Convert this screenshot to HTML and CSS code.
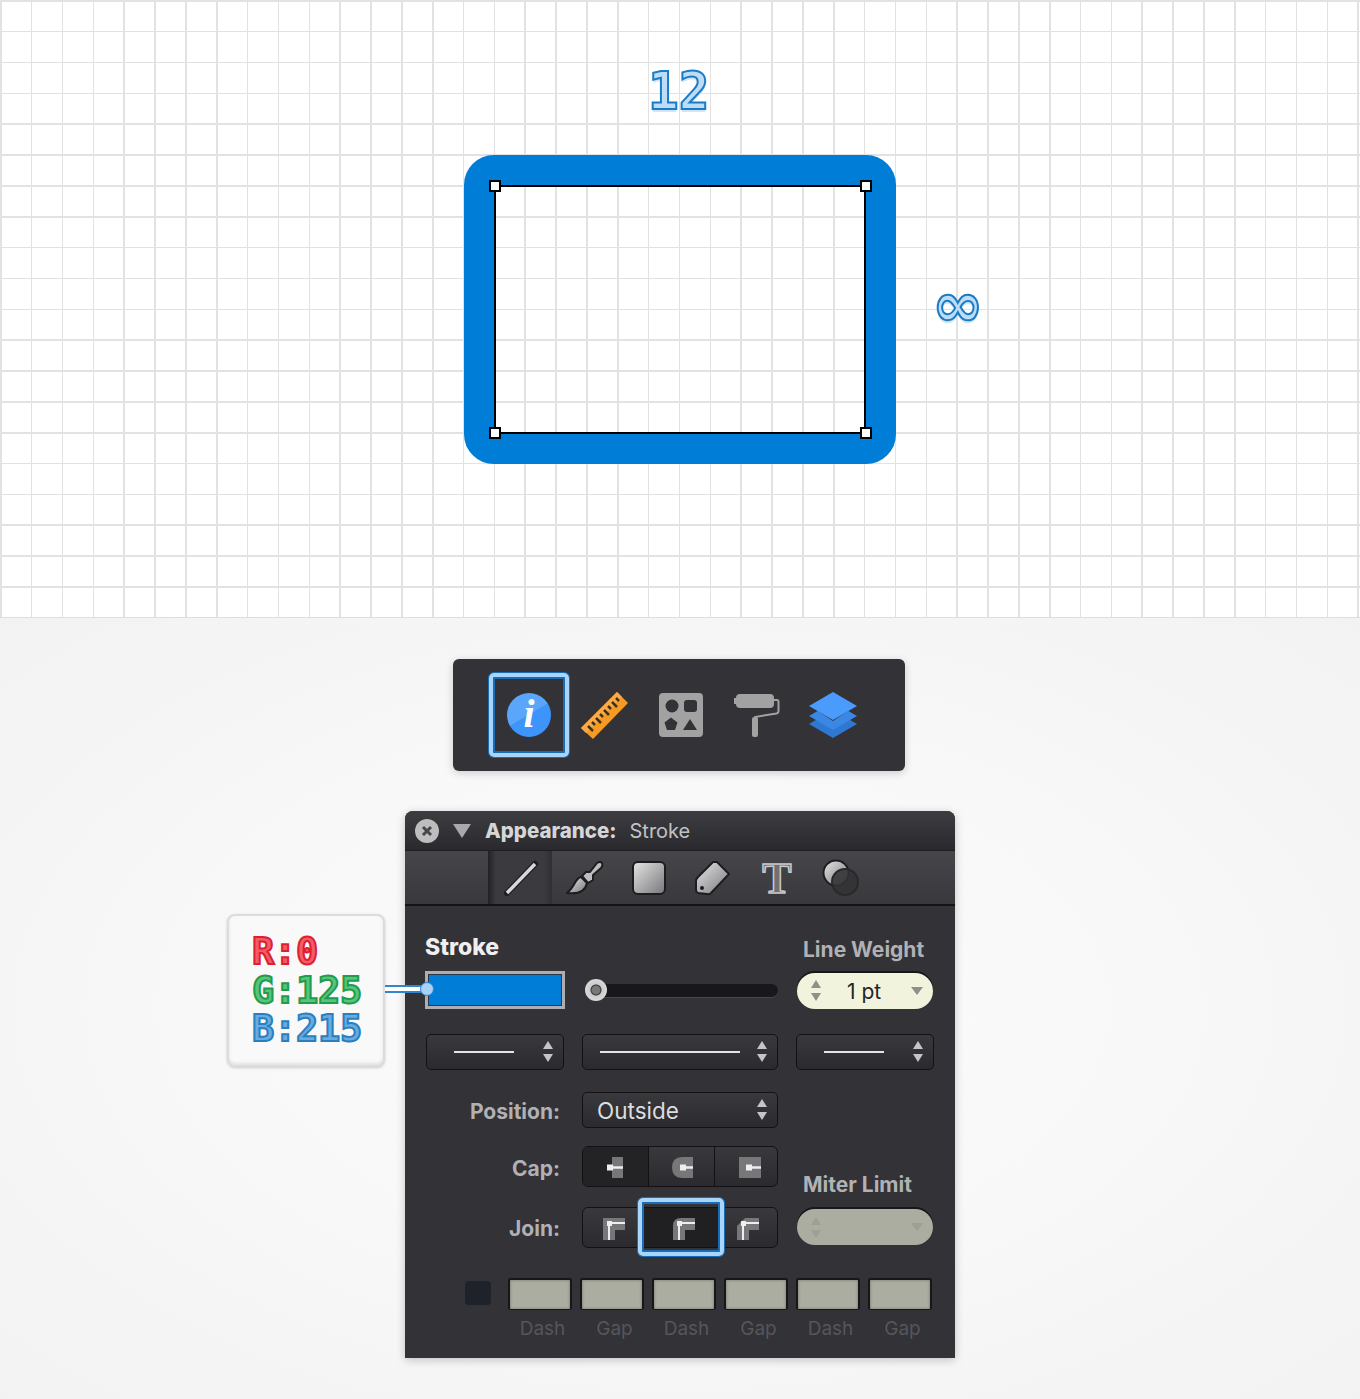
FILE: index.html
```html
<!DOCTYPE html>
<html lang="en">
  <head>
    <meta charset="UTF-8" />
    <meta name="viewport" content="width=device-width, initial-scale=1.0" />
    <title>Appearance: Stroke</title>
    <link rel="stylesheet" href="styles.css">
  </head>
  <body>
    <!-- artboard -->
    <section class="canvas">
      <div class="dim dim-width">12</div>
      <div class="dim dim-height">∞</div>
      <div class="shape">
        <div class="selection">
          <span class="handle handle-tl"></span>
          <span class="handle handle-tr"></span>
          <span class="handle handle-bl"></span>
          <span class="handle handle-br"></span>
        </div>
      </div>
    </section>

    <section class="tray">
      <!-- inspector toolbar -->
      <div class="toolbar">
        <div class="tool tool-on">
          <svg width="48" height="48" viewBox="0 0 48 48">
            <defs>
              <linearGradient id="infoFill" x1="0.2" y1="0" x2="0.8" y2="1">
                <stop offset="0" stop-color="#5aa6fa" />
                <stop offset="0.48" stop-color="#5aa6fa" />
                <stop offset="0.5" stop-color="#3d95fb" />
                <stop offset="1" stop-color="#3d95fb" />
              </linearGradient>
            </defs>
            <circle cx="24" cy="24" r="22" fill="url(#infoFill)" />
            <text x="24" y="36" text-anchor="middle" class="info-i">i</text>
          </svg>
        </div>
        <div class="tool">
          <svg width="48" height="48" viewBox="0 0 48 48">
            <path d="M0 37 36 1 47 12 12 48Z" fill="#f59a23" />
            <path d="M0 37 36 1 41 6 5 42Z" fill="#fbaa45" />
            <path d="M7 35l5 5M11 31l3 3M15 27l5 5M19 23l3 3M23 19l5 5M27 15l3 3M31 11l5 5M35 7l3 3" stroke="#3b3226" stroke-width="2.500" fill="none" />
          </svg>
        </div>
        <div class="tool">
          <svg width="44" height="44" viewBox="0 0 44 44">
            <rect width="44" height="44" rx="4" fill="#a2a2a2" />
            <circle cx="13" cy="13" r="6.500" fill="#323237" />
            <rect x="25" y="7" width="13" height="12" rx="3" fill="#323237" />
            <path d="M12 24.500 18.500 29.500 16 37H8L5.500 29.500Z" fill="#323237" />
            <path d="M31 26 38 37H24Z" fill="#323237" />
          </svg>
        </div>
        <div class="tool">
          <svg width="48" height="44" viewBox="0 0 48 44">
            <rect x="3" y="1" width="38" height="14" rx="4" fill="#a2a2a2" />
            <rect x="1" y="5" width="3" height="6" fill="#a2a2a2" />
            <path d="M41 7h3q1.500 0 1.500 2v9q0 2-2 2.500L22 24v3" fill="none" stroke="#a2a2a2" stroke-width="2" />
            <rect x="19" y="24" width="6" height="20" rx="2" fill="#a2a2a2" />
          </svg>
        </div>
        <div class="tool">
          <svg width="48" height="46" viewBox="0 0 48 46">
            <path d="M24 18 48 32 24 46 0 32Z" fill="#2f78d2" />
            <path d="M24 9 48 23 24 37 0 23Z" fill="#323237" />
            <path d="M24 10 48 24 24 38 0 24Z" fill="#3b88e4" />
            <path d="M24 -1 48 13 24 29 0 13Z" fill="#323237" />
            <path d="M24 0 48 14 24 28 0 14Z" fill="#4a9bfb" />
          </svg>
        </div>
      </div>

      <!-- appearance panel -->
      <div class="panel">
        <header class="titlebar">
          <span class="close">
            <svg width="12" height="12" viewBox="0 0 12 12"><path d="M2 2l8 8M10 2l-8 8" stroke="#47474b" stroke-width="3" /></svg>
          </span>
          <span class="disclosure"></span>
          <strong class="title">Appearance:</strong>
          <span class="subtitle">Stroke</span>
        </header>

        <nav class="tabs">
          <div class="tab tab-on">
            <svg width="36" height="36" viewBox="0 0 36 36">
              <defs>
                <linearGradient id="tabFill" x1="0" y1="0" x2="1" y2="1">
                  <stop offset="0" stop-color="#e6e6e6" />
                  <stop offset="1" stop-color="#77777b" />
                </linearGradient>
              </defs>
              <path d="M4 33 32 4" stroke="#1d1d20" stroke-width="6" stroke-linecap="round" />
              <path d="M4 33 32 4" stroke="#d8d8d8" stroke-width="3.500" />
            </svg>
          </div>
          <div class="tab">
            <svg width="38" height="36" viewBox="0 0 38 36">
              <path d="M1 33C9 34 19 33 21 23L15 17C9 18 9 27 1 33Z" fill="url(#tabFill)" stroke="#1d1d20" stroke-width="2" stroke-linejoin="round" />
              <path d="M16 16 20 12 24 12 31 3Q34 1 36 3 37 6 35 8L27 15V20L22 23Z" fill="#bdbdbd" stroke="#1d1d20" stroke-width="2" stroke-linejoin="round" />
            </svg>
          </div>
          <div class="tab">
            <svg width="36" height="36" viewBox="0 0 36 36">
              <rect x="2" y="2" width="32" height="32" rx="5" fill="url(#tabFill)" stroke="#1d1d20" stroke-width="2" />
            </svg>
          </div>
          <div class="tab">
            <svg width="36" height="36" viewBox="0 0 36 36">
              <path d="M22 2 34 14 16 33Q14 35 12 34L3 33Q1 32 1 30V21Q1 19 3 17L18 2Z" fill="url(#tabFill)" stroke="#1d1d20" stroke-width="2" stroke-linejoin="round" />
              <circle cx="7" cy="28" r="2" fill="#1d1d20" />
            </svg>
          </div>
          <div class="tab">
            <svg class="tab-t-icon" width="36" height="40" viewBox="0 0 36 40">
              <text x="18" y="35" text-anchor="middle" class="tab-t">T</text>
            </svg>
          </div>
          <div class="tab">
            <svg width="38" height="38" viewBox="0 0 38 38">
              <circle cx="14" cy="14" r="12.500" fill="url(#tabFill)" stroke="#1d1d20" stroke-width="2" />
              <circle cx="23" cy="23" r="13" fill="#333336" fill-opacity="0.88" stroke="#29292c" stroke-width="2" />
            </svg>
          </div>
        </nav>

        <div class="panel-body">
          <div class="row row-labels">
            <h2 class="stroke-label">Stroke</h2>
            <span></span>
            <span class="group-label">Line Weight</span>
          </div>

          <div class="row row-stroke">
            <div class="swatch"></div>
            <div class="slider"><span class="knob"></span></div>
            <div class="stepper">
              <span class="arrows arrows-soft"><i class="up"></i><i class="down"></i></span>
              <span class="stepper-value">1 pt</span>
              <i class="down drop"></i>
            </div>
          </div>

          <div class="row row-selects">
            <div class="select select-line"><span class="stroke-line line-short"></span><span class="arrows"><i class="up"></i><i class="down"></i></span></div>
            <div class="select select-line"><span class="stroke-line line-long"></span><span class="arrows"><i class="up"></i><i class="down"></i></span></div>
            <div class="select select-line select-last"><span class="stroke-line line-short"></span><span class="arrows"><i class="up"></i><i class="down"></i></span></div>
          </div>

          <div class="row row-position">
            <span class="field-label">Position:</span>
            <div class="select select-text">Outside<span class="arrows"><i class="up"></i><i class="down"></i></span></div>
          </div>

          <div class="row row-cap">
            <span class="field-label">Cap:</span>
            <div class="segments segments-cap">
              <div class="segment segment-dark">
                <svg width="24" height="24" viewBox="0 0 24 24">
                  <rect x="6" y="1" width="11" height="21" fill="#77777a" />
                  <path d="M1 11.500H17" stroke="#eee" stroke-width="2.500" />
                  <rect x="1" y="8.500" width="6" height="6" fill="#eee" />
                </svg>
              </div>
              <div class="segment">
                <svg width="24" height="24" viewBox="0 0 24 24">
                  <path d="M23 1H12Q2 1 2 11.500 2 22 12 22H23Z" fill="#77777a" />
                  <path d="M11 11.500H23" stroke="#eee" stroke-width="2.500" />
                  <rect x="10" y="8.500" width="6" height="6" fill="#eee" />
                </svg>
              </div>
              <div class="segment">
                <svg width="24" height="24" viewBox="0 0 24 24">
                  <rect x="1" y="1" width="22" height="21" fill="#77777a" />
                  <path d="M9 11.500H23" stroke="#eee" stroke-width="2.500" />
                  <rect x="8" y="8.500" width="6" height="6" fill="#eee" />
                </svg>
              </div>
            </div>
            <span class="group-label miter-label">Miter Limit</span>
          </div>

          <div class="row row-join">
            <span class="field-label">Join:</span>
            <div class="segments segments-join">
              <div class="segment">
                <svg width="24" height="24" viewBox="0 0 24 24">
                  <path d="M1 1H23V13H13V23H1Z" fill="#77777a" />
                  <path d="M7 23V6H23" stroke="#eee" stroke-width="2" fill="none" />
                  <rect x="5" y="4" width="5" height="5" fill="#eee" />
                </svg>
              </div>
              <div class="segment segment-on">
                <svg width="24" height="24" viewBox="0 0 24 24">
                  <path d="M9 1H23V13H13V23H1V9Q1 1 9 1Z" fill="#77777a" />
                  <path d="M7 23V6H23" stroke="#eee" stroke-width="2" fill="none" />
                  <rect x="5" y="4" width="5" height="5" fill="#eee" />
                </svg>
              </div>
              <div class="segment">
                <svg width="24" height="24" viewBox="0 0 24 24">
                  <path d="M9 1H23V13H13V23H1V9Z" fill="#77777a" />
                  <path d="M7 23V6H23" stroke="#eee" stroke-width="2" fill="none" />
                  <rect x="5" y="4" width="5" height="5" fill="#eee" />
                </svg>
              </div>
            </div>
            <div class="stepper stepper-off">
              <span class="arrows arrows-soft"><i class="up"></i><i class="down"></i></span>
              <i class="down drop"></i>
            </div>
          </div>

          <div class="dash-row">
            <span class="dash-check"></span>
            <div class="dash-field"><span class="dash-box"></span><span class="dash-name">Dash</span></div>
            <div class="dash-field"><span class="dash-box"></span><span class="dash-name">Gap</span></div>
            <div class="dash-field"><span class="dash-box"></span><span class="dash-name">Dash</span></div>
            <div class="dash-field"><span class="dash-box"></span><span class="dash-name">Gap</span></div>
            <div class="dash-field"><span class="dash-box"></span><span class="dash-name">Dash</span></div>
            <div class="dash-field"><span class="dash-box"></span><span class="dash-name">Gap</span></div>
          </div>
        </div>
      </div>

      <!-- colour callout -->
      <aside class="callout">
        <div class="rgb rgb-r">R:0</div>
        <div class="rgb rgb-g">G:125</div>
        <div class="rgb rgb-b">B:215</div>
        <span class="callout-wire"></span>
        <span class="callout-dot"></span>
      </aside>
    </section>
  </body>
</html>
```

FILE: styles.css
```css
:root {
  --blue: rgb(0, 125, 215);
  --panel: #323237;
  --ring-dark: #1a6db5;
  --ring-light: #a8d5fc;
  --grid-line: #e2e2e4;
  --field-off: #abada0;
}

* {
  box-sizing: border-box;
}

html {
  font-family: "Inter", "Liberation Sans", sans-serif;
}

body {
  margin: 0;
  width: 1360px;
  height: 1399px;
  overflow: hidden;
  background: #f6f6f6;
}

/* artboard */

.canvas {
  position: relative;
  height: 618px;
  background-color: #fff;
  background-image:
    repeating-linear-gradient(90deg, var(--grid-line) 0, var(--grid-line) 1.6px, transparent 1.6px, transparent 30.85px),
    repeating-linear-gradient(180deg, var(--grid-line) 0, var(--grid-line) 1.6px, transparent 1.6px, transparent 30.85px);
  border-bottom: 1px solid #dedede;
}

.dim {
  position: absolute;
  font-family: "DejaVu Sans Mono", monospace;
  font-weight: 700;
  color: #bcdcf8;
  -webkit-text-stroke: 2px #1a7bc6;
  text-shadow: 0 3px 0 #d3e6f7;
}

.dim-width {
  left: 648px;
  top: 63px;
  font-size: 51px;
  line-height: 58px;
}

.dim-height {
  left: 932px;
  top: 274px;
  font-family: "DejaVu Sans", sans-serif;
  font-size: 62px;
  line-height: 62px;
}

.shape {
  position: absolute;
  left: 464px;
  top: 155px;
  width: 432px;
  height: 309px;
  border: 30px solid var(--blue);
  border-radius: 30px;
}

.selection {
  position: absolute;
  inset: 0;
  border: 2px solid #000;
}

.handle {
  position: absolute;
  width: 12px;
  height: 12px;
  background: #fff;
  border: 2px solid #000;
}

.handle-tl { left: -7px; top: -7px; }
.handle-tr { right: -8px; top: -7px; }
.handle-bl { left: -7px; bottom: -7px; }
.handle-br { right: -8px; bottom: -7px; }

/* tray */

.tray {
  position: relative;
  height: 781px;
  padding-top: 41px;
  display: flex;
  flex-direction: column;
  align-items: center;
  background: radial-gradient(ellipse at 50% 50%, #fbfbfb 0%, #f8f8f8 50%, #f2f2f2 100%);
}

.toolbar {
  width: 452px;
  height: 112px;
  margin-right: 2px;
  padding-left: 38px;
  display: flex;
  align-items: center;
  background: var(--panel);
  border-radius: 6px;
  box-shadow: 0 2px 8px rgba(0, 0, 0, 0.18);
}

.tool {
  position: relative;
  width: 76px;
  height: 112px;
  display: flex;
  align-items: center;
  justify-content: center;
}

.tool-on::after,
.segment-on::after {
  content: "";
  position: absolute;
  border: 4px solid var(--ring-light);
  border-radius: 5px;
  box-shadow: 0 0 0 1px var(--ring-dark), inset 0 0 0 2px var(--ring-dark);
}

.tool-on::after {
  left: -2px;
  right: -2px;
  top: 14px;
  bottom: 14px;
}

/* panel */

.panel {
  width: 550px;
  height: 547px;
  margin-top: 40px;
  background: var(--panel);
  border-radius: 8px 8px 0 0;
  box-shadow: 0 2px 10px rgba(0, 0, 0, 0.22);
}

.titlebar {
  height: 40px;
  padding-left: 10px;
  display: flex;
  align-items: center;
  background: linear-gradient(#3c3c41, #2a2a2e);
  border-radius: 8px 8px 0 0;
  border-bottom: 1px solid #1e1e20;
}

.close {
  width: 24px;
  height: 24px;
  border-radius: 50%;
  background: #bdbdbd;
  display: flex;
  align-items: center;
  justify-content: center;
}

.disclosure {
  margin-left: 14px;
  border-left: 9px solid transparent;
  border-right: 9px solid transparent;
  border-top: 14px solid #a9a9ab;
}

.title {
  margin-left: 14px;
  font-size: 20.500px;
  font-weight: 800;
  line-height: 38px;
  color: #d6d6d6;
}

.subtitle {
  margin-left: 13px;
  font-size: 20px;
  line-height: 38px;
  color: #c2c2c4;
}

.tabs {
  height: 55px;
  padding-left: 84px;
  display: flex;
  background: linear-gradient(#45454a, #38383d);
  border-bottom: 2px solid #141416;
}

.tab {
  width: 64px;
  display: flex;
  align-items: center;
  justify-content: center;
}

.tab-on {
  margin-left: -1px;
  margin-right: 1px;
  padding-left: 1px;
  background: linear-gradient(90deg, #222225, #3a3a3f 12%, #3a3a3f 88%, #303034);
}

.tab-t-icon {
  overflow: visible;
}

.tab-t {
  font-family: "Liberation Serif", serif;
  font-size: 44px;
  font-weight: 700;
  fill: #707074;
  stroke: #c8c8ca;
  stroke-width: 1.500px;
}

.info-i {
  font-family: "Liberation Serif", serif;
  font-size: 40px;
  font-weight: 700;
  font-style: italic;
  fill: #fff;
}

.panel-body {
  padding: 28px 0 0 20px;
}

.row {
  display: grid;
  grid-template-columns: 140px 196px 139px;
  column-gap: 17px;
}

.row-labels { height: 37px; }
.row-stroke { height: 38px; align-items: center; }
.row-selects { height: 36px; margin-top: 25px; }
.row-position { height: 36px; margin-top: 22px; }
.row-cap { height: 41px; margin-top: 18px; }
.row-join { height: 41px; margin-top: 20px; }

.stroke-label {
  margin: 0;
  font-size: 23px;
  font-weight: 800;
  line-height: 27px;
  color: #efefef;
}

.group-label {
  padding: 3px 0 0 8px;
  font-size: 21px;
  font-weight: 700;
  line-height: 26px;
  color: #b1b1b4;
  white-space: nowrap;
}

.miter-label {
  align-self: end;
  margin-bottom: -9px;
}

.field-label {
  padding-right: 5px;
  padding-top: 2px;
  font-size: 21px;
  font-weight: 700;
  line-height: 36px;
  text-align: right;
  color: #b1b1b4;
}

.row-cap .field-label { line-height: 41px; }
.row-join .field-label { line-height: 41px; padding-top: 1px; }

.swatch {
  height: 38px;
  background: var(--blue);
  border: 3px solid #aeaeb0;
  box-shadow: inset 0 0 0 1px #25384a;
}

.slider {
  position: relative;
  height: 13px;
  margin-left: 3px;
  background: #18181a;
  border-radius: 7px;
  box-shadow: 0 1px 0 #46464b;
}

.knob {
  position: absolute;
  left: 0;
  top: -5px;
  width: 22px;
  height: 22px;
  border-radius: 50%;
  background: radial-gradient(circle, #777 0, #777 4px, #333 5px, #ccc 6px, #e6e6e6 100%);
}

.stepper {
  position: relative;
  width: 136px;
  height: 36px;
  margin-left: 2px;
  margin-top: 1px;
  padding-left: 14px;
  display: flex;
  align-items: center;
  background: #f1f3dd;
  border-radius: 18px;
  box-shadow: 0 -2px 0 #17171a;
}

.stepper-value {
  margin-left: 26px;
  padding-top: 2px;
  font-size: 21px;
  color: #25252a;
}

.stepper-off {
  margin-top: 2px;
  background: var(--field-off);
}

.stepper-off .up,
.stepper-off .down {
  opacity: 0.45;
}

.arrows {
  display: flex;
  flex-direction: column;
  gap: 5px;
}

.up,
.down {
  display: block;
  width: 0;
  height: 0;
  border-left: 5px solid transparent;
  border-right: 5px solid transparent;
}

.up { border-bottom: 8px solid #c5c5c8; }
.down { border-top: 8px solid #c5c5c8; }

.arrows-soft .up { border-bottom-color: #8f9088; }
.arrows-soft .down { border-top-color: #8f9088; }

.drop {
  position: absolute;
  right: 10px;
  top: 14px;
  border-left-width: 6px;
  border-right-width: 6px;
  border-top-color: #8f9088;
}

.select {
  position: relative;
  height: 36px;
  display: flex;
  align-items: center;
  background: linear-gradient(#39393d, #2b2b2f);
  border: 1px solid #121214;
  border-radius: 5px;
}

.select .arrows {
  position: absolute;
  right: 10px;
  top: 6px;
}

.select-line {
  padding-left: 17px;
}

.row-selects .select:first-child {
  margin: 0 1px;
  padding-left: 27px;
}

.select-last {
  margin-left: 1px;
  padding-left: 27px;
}

.stroke-line {
  display: block;
  height: 2px;
  background: #e4e4e6;
}

.line-short { width: 60px; }
.line-long { width: 140px; }

.select-text {
  padding-left: 14px;
  font-size: 22.500px;
  color: #dcdcde;
}

.segments {
  height: 41px;
  display: grid;
  background: linear-gradient(#39393d, #2b2b2f);
  border: 1px solid #121214;
  border-radius: 6px;
}

.segments-cap { grid-template-columns: 65px 66px 63px; }
.segments-join { grid-template-columns: 56px 84px 54px; }

.segment {
  position: relative;
  padding-top: 2px;
  display: flex;
  align-items: center;
  justify-content: center;
}

.segments-cap .segment + .segment {
  border-left: 1px solid #121214;
}

.segments-cap .segment:first-child { padding-left: 5px; }
.segments-cap .segment:last-child { padding-left: 7px; }
.segments-join .segment:first-child { padding-left: 6px; }
.segments-join .segment-on { padding-left: 6px; }
.segments-join .segment:last-child { padding-right: 4px; }

.segment-dark {
  background: #232326;
  border-radius: 5px 0 0 5px;
}

.segment-on {
  background: #202023;
}

.segment-on::after {
  left: -1px;
  right: -1px;
  top: -10px;
  bottom: -9px;
}

.dash-row {
  margin: 30px 0 0 40px;
  display: flex;
  gap: 8px;
}

.dash-check {
  width: 26px;
  height: 24px;
  margin: 3px 9px 0 0;
  background: #1e222b;
  border-radius: 4px;
}

.dash-field {
  width: 64px;
  display: flex;
  flex-direction: column;
  align-items: center;
}

.dash-box {
  width: 64px;
  height: 32px;
  background: var(--field-off);
  border: 2px solid #17171a;
  border-bottom-width: 1px;
  border-radius: 2px;
  box-shadow: inset 0 0 3px #6f7166;
}

.dash-name {
  margin-top: 7px;
  padding-left: 5px;
  font-size: 19px;
  line-height: 24px;
  color: #56565b;
}

/* callout */

.callout {
  position: absolute;
  left: 227px;
  top: 296px;
  width: 158px;
  height: 153px;
  padding: 17px 0 0 23px;
  background: #f9f9f9;
  border: 2px solid #dcdcdc;
  border-radius: 8px;
  box-shadow: inset 0 -2px 3px #e2e2e2, 0 1px 3px rgba(0, 0, 0, 0.18);
}

.rgb {
  font-family: "DejaVu Sans Mono", monospace;
  font-size: 37px;
  font-weight: 700;
  line-height: 38.500px;
  letter-spacing: -0.300px;
  -webkit-text-stroke-width: 2px;
}

.rgb-r { color: #f25c68; -webkit-text-stroke-color: #dd1f30; }
.rgb-g { color: #58c47c; -webkit-text-stroke-color: #1f9c4c; }
.rgb-b { color: #68ace2; -webkit-text-stroke-color: #2a7fbf; }

.callout-wire {
  position: absolute;
  left: 156px;
  top: 69px;
  width: 42px;
  height: 8px;
  background: #fff;
  border-top: 2px solid #2f86cf;
  border-bottom: 2px solid #2f86cf;
}

.callout-dot {
  position: absolute;
  left: 191px;
  top: 66px;
  width: 14px;
  height: 14px;
  border-radius: 50%;
  background: #a9d0f6;
  border: 1.500px solid #2f86cf;
}
```
